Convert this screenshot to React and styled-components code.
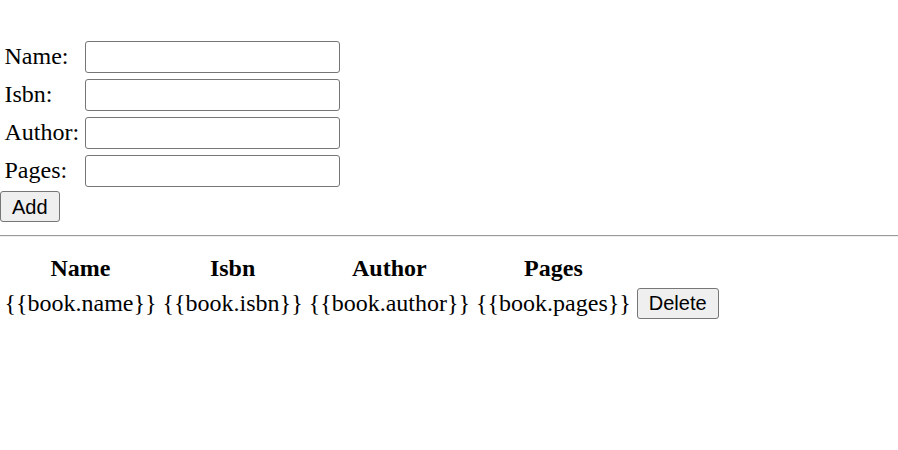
import React from 'react';
import styled, { createGlobalStyle } from 'styled-components';

const GlobalStyle = createGlobalStyle`
    body {
        margin: 0;
        background: #fff;
        font-family: 'Liberation Serif', 'Times New Roman', serif;
        font-size: 24px;
        color: #000;
    }
`;

const Page = styled.div`
    padding-top: 36px;
`;

const FormTable = styled.table`
    border-spacing: 3px;
    border-collapse: separate;

    td {
        padding: 1.5px;
        height: 32px;
    }
`;

const Label = styled.td`
    white-space: nowrap;
`;

const Input = styled.input`
    box-sizing: border-box;
    display: block;
    width: 255px;
    height: 32px;
    border: 1px solid #767676;
    border-radius: 3px;
    font-family: 'Liberation Sans', Arial, sans-serif;
    font-size: 20px;
    padding: 1px 3px;
    margin: 0;
`;

const Button = styled.button`
    box-sizing: border-box;
    height: 31px;
    padding: 0 11px;
    margin: 0;
    border: 1px solid #767676;
    border-radius: 3px;
    background: #efefef;
    font-family: 'Liberation Sans', Arial, sans-serif;
    font-size: 20px;
    color: #000;
    line-height: 1;
`;

const Rule = styled.hr`
    margin: 13px 0 13px;
    border: none;
    border-top: 1px solid #9a9a9a;
    border-bottom: 1px solid #eee;
`;

const BookTable = styled.table`
    border-spacing: 3px;
    border-collapse: separate;

    th, td {
        padding: 1.5px;
        white-space: nowrap;
    }

    th {
        font-weight: bold;
        text-align: center;
    }
`;

const fields = ['Name', 'Isbn', 'Author', 'Pages'];

export default function App() {
    return (
        <>
            <GlobalStyle />
            <Page>
                <form>
                    <FormTable>
                        <tbody>
                            {fields.map(f => (
                                <tr key={f}>
                                    <Label>{f}:</Label>
                                    <td><Input type="text" /></td>
                                </tr>
                            ))}
                        </tbody>
                    </FormTable>
                    <Button type="button">Add</Button>
                </form>
                <Rule />
                <BookTable>
                    <thead>
                        <tr>
                            {fields.map(f => <th key={f}>{f}</th>)}
                        </tr>
                    </thead>
                    <tbody>
                        <tr>
                            <td>{'{{book.name}}'}</td>
                            <td>{'{{book.isbn}}'}</td>
                            <td>{'{{book.author}}'}</td>
                            <td>{'{{book.pages}}'}</td>
                            <td><Button type="button">Delete</Button></td>
                        </tr>
                    </tbody>
                </BookTable>
            </Page>
        </>
    );
}
